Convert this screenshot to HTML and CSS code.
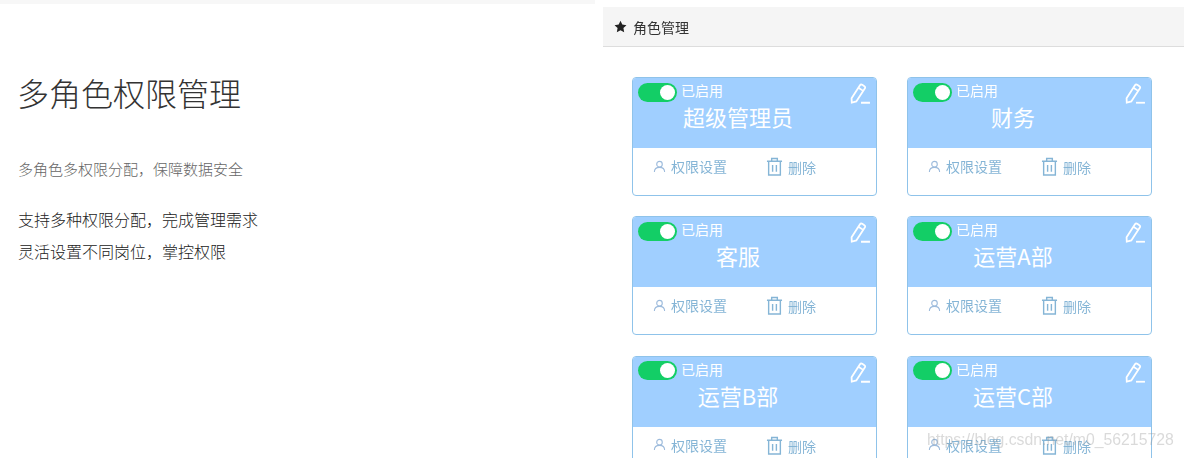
FILE: index.html
```html
<!DOCTYPE html>
<html lang="zh">
<head>
<meta charset="utf-8">
<title>多角色权限管理</title>
<link rel="stylesheet" href="styles.css">
</head>
<body>
<div class="page">
  <section class="intro">
    <div class="strip"></div>
    <h1 class="intro-title">多角色权限管理</h1>
    <p class="intro-sub">多角色多权限分配&#xFF0C;保障数据安全</p>
    <p class="intro-line first">支持多种权限分配&#xFF0C;完成管理需求</p>
    <p class="intro-line">灵活设置不同岗位&#xFF0C;掌控权限</p>
  </section>
  <section class="panel">
    <header class="panel-head">
      <svg class="star" viewBox="0 0 24 24"><path d="M12 1.500l3.300 7 7.700 1-5.600 5.300 1.400 7.700L12 18.800 5.200 22.500l1.400-7.700L1 9.500l7.700-1z"/></svg>
      <span>角色管理</span>
    </header>
    <div class="grid">
      <article class="card">
        <div class="card-top">
          <div class="state"><span class="switch"><i></i></span><span class="state-text">已启用</span></div>
          <svg class="pen" viewBox="0 0 20 20"><path d="M1.500 14.500L9.500 2.200c.6-.9 1.400-1 2.200-.5l2 1.300c.8.500 1 1.300.4 2.200L6 17.500l-4.300 1.200z M8 4.500l4.600 3"/><path d="M10.500 18.800h8.500"/></svg>
          <h2 class="card-title">超级管理员</h2>
        </div>
        <div class="card-actions">
          <span class="action perm"><svg class="user" viewBox="0 0 14 14"><circle cx="7" cy="4.500" r="3"/><path d="M1.500 13c0-3.200 2.400-5 5.500-5s5.500 1.800 5.500 5"/></svg>权限设置</span>
          <span class="action del"><svg class="trash" viewBox="0 0 18 20"><path d="M1 4.500h16M6 4V1.500h6V4M2.800 4.500v14.500h12.400V4.500M7 8.500v7M11 8.500v7"/></svg><span class="del-text">删除</span></span>
        </div>
      </article>
      <article class="card">
        <div class="card-top">
          <div class="state"><span class="switch"><i></i></span><span class="state-text">已启用</span></div>
          <svg class="pen" viewBox="0 0 20 20"><path d="M1.500 14.500L9.500 2.200c.6-.9 1.400-1 2.200-.5l2 1.300c.8.500 1 1.300.4 2.200L6 17.500l-4.300 1.200z M8 4.500l4.600 3"/><path d="M10.500 18.800h8.500"/></svg>
          <h2 class="card-title">财务</h2>
        </div>
        <div class="card-actions">
          <span class="action perm"><svg class="user" viewBox="0 0 14 14"><circle cx="7" cy="4.500" r="3"/><path d="M1.500 13c0-3.200 2.400-5 5.500-5s5.500 1.800 5.500 5"/></svg>权限设置</span>
          <span class="action del"><svg class="trash" viewBox="0 0 18 20"><path d="M1 4.500h16M6 4V1.500h6V4M2.800 4.500v14.500h12.400V4.500M7 8.500v7M11 8.500v7"/></svg><span class="del-text">删除</span></span>
        </div>
      </article>
      <article class="card">
        <div class="card-top">
          <div class="state"><span class="switch"><i></i></span><span class="state-text">已启用</span></div>
          <svg class="pen" viewBox="0 0 20 20"><path d="M1.500 14.500L9.500 2.200c.6-.9 1.400-1 2.200-.5l2 1.300c.8.500 1 1.300.4 2.200L6 17.500l-4.300 1.200z M8 4.500l4.600 3"/><path d="M10.500 18.800h8.500"/></svg>
          <h2 class="card-title">客服</h2>
        </div>
        <div class="card-actions">
          <span class="action perm"><svg class="user" viewBox="0 0 14 14"><circle cx="7" cy="4.500" r="3"/><path d="M1.500 13c0-3.200 2.400-5 5.500-5s5.500 1.800 5.500 5"/></svg>权限设置</span>
          <span class="action del"><svg class="trash" viewBox="0 0 18 20"><path d="M1 4.500h16M6 4V1.500h6V4M2.800 4.500v14.500h12.400V4.500M7 8.500v7M11 8.500v7"/></svg><span class="del-text">删除</span></span>
        </div>
      </article>
      <article class="card">
        <div class="card-top">
          <div class="state"><span class="switch"><i></i></span><span class="state-text">已启用</span></div>
          <svg class="pen" viewBox="0 0 20 20"><path d="M1.500 14.500L9.500 2.200c.6-.9 1.400-1 2.200-.5l2 1.300c.8.500 1 1.300.4 2.200L6 17.500l-4.300 1.200z M8 4.500l4.600 3"/><path d="M10.500 18.800h8.500"/></svg>
          <h2 class="card-title">运营A部</h2>
        </div>
        <div class="card-actions">
          <span class="action perm"><svg class="user" viewBox="0 0 14 14"><circle cx="7" cy="4.500" r="3"/><path d="M1.500 13c0-3.200 2.400-5 5.500-5s5.500 1.800 5.500 5"/></svg>权限设置</span>
          <span class="action del"><svg class="trash" viewBox="0 0 18 20"><path d="M1 4.500h16M6 4V1.500h6V4M2.800 4.500v14.500h12.400V4.500M7 8.500v7M11 8.500v7"/></svg><span class="del-text">删除</span></span>
        </div>
      </article>
      <article class="card">
        <div class="card-top">
          <div class="state"><span class="switch"><i></i></span><span class="state-text">已启用</span></div>
          <svg class="pen" viewBox="0 0 20 20"><path d="M1.500 14.500L9.500 2.200c.6-.9 1.400-1 2.200-.5l2 1.300c.8.500 1 1.300.4 2.200L6 17.500l-4.300 1.200z M8 4.500l4.600 3"/><path d="M10.500 18.800h8.500"/></svg>
          <h2 class="card-title">运营B部</h2>
        </div>
        <div class="card-actions">
          <span class="action perm"><svg class="user" viewBox="0 0 14 14"><circle cx="7" cy="4.500" r="3"/><path d="M1.500 13c0-3.200 2.400-5 5.500-5s5.500 1.800 5.500 5"/></svg>权限设置</span>
          <span class="action del"><svg class="trash" viewBox="0 0 18 20"><path d="M1 4.500h16M6 4V1.500h6V4M2.800 4.500v14.500h12.400V4.500M7 8.500v7M11 8.500v7"/></svg><span class="del-text">删除</span></span>
        </div>
      </article>
      <article class="card">
        <div class="card-top">
          <div class="state"><span class="switch"><i></i></span><span class="state-text">已启用</span></div>
          <svg class="pen" viewBox="0 0 20 20"><path d="M1.500 14.500L9.500 2.200c.6-.9 1.400-1 2.200-.5l2 1.300c.8.500 1 1.300.4 2.200L6 17.500l-4.300 1.200z M8 4.500l4.600 3"/><path d="M10.500 18.800h8.500"/></svg>
          <h2 class="card-title">运营C部</h2>
        </div>
        <div class="card-actions">
          <span class="action perm"><svg class="user" viewBox="0 0 14 14"><circle cx="7" cy="4.500" r="3"/><path d="M1.500 13c0-3.200 2.400-5 5.500-5s5.500 1.800 5.500 5"/></svg>权限设置</span>
          <span class="action del"><svg class="trash" viewBox="0 0 18 20"><path d="M1 4.500h16M6 4V1.500h6V4M2.800 4.500v14.500h12.400V4.500M7 8.500v7M11 8.500v7"/></svg><span class="del-text">删除</span></span>
        </div>
      </article>
    </div>
  </section>
</div>
<div class="watermark">https://blog.csdn.net/m0_56215728</div>
</body>
</html>
```
FILE: styles.css
```css
* { box-sizing: border-box; }
html, body { margin: 0; padding: 0; height: 458px; overflow: hidden; background: #fff; }
body { font-family: "Noto Sans CJK SC", "Liberation Sans", sans-serif; position: relative; }
.page { display: flex; height: 458px; overflow: hidden; }

.intro { width: 603px; flex: none; }
.strip { width: 595px; height: 4px; background: #f7f7f7; }
.intro-title { margin: 66px 0 0 17px; font-size: 32px; font-weight: 300; line-height: 44px; color: #333; }
.intro-sub { margin: 44px 0 0 18px; font-size: 15px; font-weight: 300; line-height: 22px; color: #666; }
.intro-line { margin: 10px 0 0 18px; font-size: 16px; font-weight: 300; line-height: 22px; color: #222; }
.intro-line.first { margin-top: 28px; }

.panel { flex: 1; padding-top: 7px; min-width: 0; filter: blur(.35px); }
.panel-head { height: 40px; display: flex; align-items: center; padding-left: 11px; background: #f5f5f5; border-bottom: 1px solid #ddd; font-size: 14px; line-height: 20px; color: #333; }
.star { width: 13px; height: 13px; margin-right: 6px; fill: #222; }

.grid { display: grid; grid-template-columns: 245px 245px; column-gap: 30px; row-gap: 20.400px; padding: 30px 0 0 29px; }
.card { height: 119px; border: 1px solid #8fc3ea; border-radius: 4px; background: #fff; overflow: hidden; }
.card-top { position: relative; height: 70px; background: #a0cfff; color: #fff; padding-top: 4px; }
.state { display: flex; align-items: center; gap: 4px; padding-left: 5px; font-size: 14px; line-height: 20px; height: 20px; font-weight: 400; }
.state-text { position: relative; top: -2px; }
.switch { display: block; width: 39px; height: 19px; border-radius: 10px; background: #13ce66; position: relative; }
.switch i { position: absolute; right: 2px; top: 2px; width: 15px; height: 15px; border-radius: 50%; background: #fff; }
.pen { position: absolute; right: 5px; top: 5px; width: 21px; height: 21px; fill: none; stroke: #fff; stroke-width: 1.700; }
.card-title { width: 210px; margin: -1px 0 0; text-align: center; font-size: 22px; font-weight: 400; line-height: 30px; }

.card-actions { display: flex; align-items: flex-start; font-size: 14px; font-weight: 400; color: #85b5d6; padding-top: 8px; line-height: 20px; }
.action { display: flex; align-items: center; }
.perm { margin-left: 20px; width: 113px; }
.del { align-items: flex-start; }
.del-text { padding-top: 1px; }
.user { width: 13px; height: 13px; margin-right: 5px; fill: none; stroke: #9dbbdc; stroke-width: 1.200; }
.trash { width: 17px; height: 19px; margin: 1px 5px 0 0; fill: none; stroke: #85b5d6; stroke-width: 1.500; }

.watermark { position: absolute; left: 927px; top: 431px; font-family: "Liberation Sans", sans-serif; font-size: 15.800px; line-height: 18px; color: rgba(150,150,150,.35); white-space: nowrap; }
```
